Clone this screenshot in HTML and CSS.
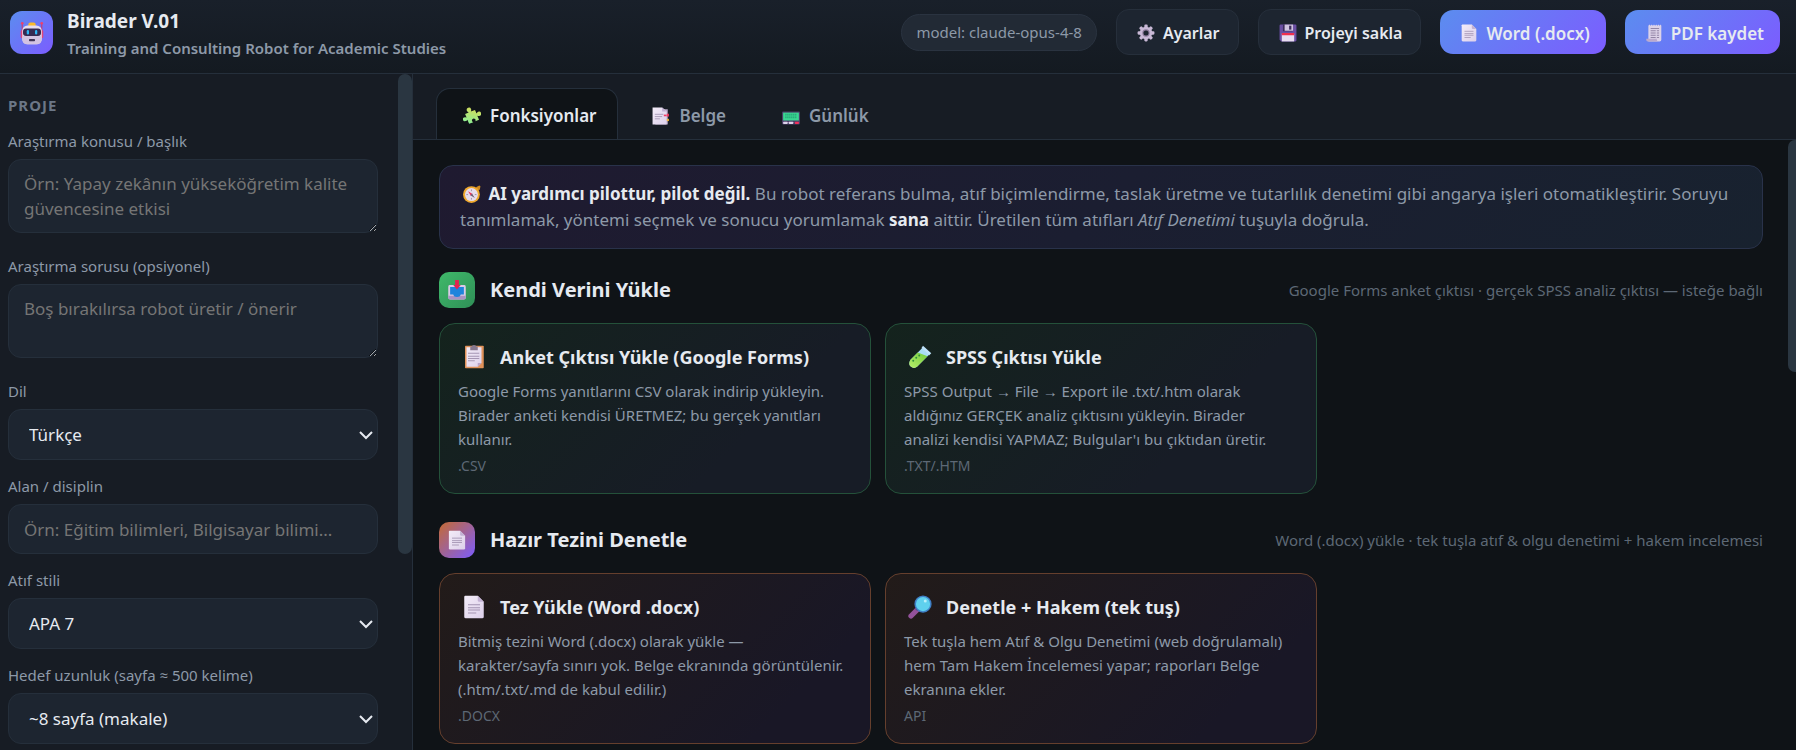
FILE: index.html
```
<!DOCTYPE html>
<html lang="tr">
<head>
    <meta charset="UTF-8">
    <meta name="viewport" content="width=device-width, initial-scale=1.0">
    <title>Birader V.01</title>
    <link rel="stylesheet" href="styles.css">
</head>
<body>

    <!-- Icon set -->
    <svg class="sprite" aria-hidden="true">
        <defs>
            <linearGradient id="g-puzzle" x1="1" y1="0" x2="0" y2="1">
                <stop offset="0" stop-color="#e8d84a"/>
                <stop offset="1" stop-color="#7ff2a0"/>
            </linearGradient>
            <linearGradient id="g-page" x1="0" y1="0" x2="1" y2="1">
                <stop offset="0" stop-color="#f3ecf8"/>
                <stop offset="1" stop-color="#ddd0ea"/>
            </linearGradient>
            <linearGradient id="g-tube" x1="1" y1="0" x2="0" y2="1">
                <stop offset="0" stop-color="#6fc93c"/>
                <stop offset="1" stop-color="#b8f06a"/>
            </linearGradient>
        </defs>
        <symbol id="i-robot" viewBox="0 0 32 32">
            <path d="M3 4v10M29 4v10" stroke="#c0407a" stroke-width="1.6"/>
            <circle cx="3" cy="3" r="1.8" fill="#f0406c"/>
            <circle cx="29" cy="3" r="1.8" fill="#f0406c"/>
            <rect x="1" y="12" width="5" height="11" rx="2" fill="#e0457b"/>
            <rect x="26" y="12" width="5" height="11" rx="2" fill="#e0457b"/>
            <path d="M11 5q0-3 3-3h4q3 0 3 3v3H11z" fill="#f9b92b"/>
            <rect x="3" y="6" width="26" height="25" rx="7" fill="#e6dcf0"/>
            <path d="M3 20h26v4q0 7-7 7H10q-7 0-7-7z" fill="#d3c3e2"/>
            <rect x="4" y="10" width="24" height="10" rx="4" fill="#352a52"/>
            <rect x="9" y="12" width="3" height="6" rx="1.5" fill="#2db6f5"/>
            <rect x="20" y="12" width="3" height="6" rx="1.5" fill="#2db6f5"/>
            <rect x="12" y="24" width="8" height="3" rx="1" fill="#3f3458"/>
        </symbol>
        <symbol id="i-gear" viewBox="0 0 32 32">
            <g fill="#c9b9d6">
                <rect x="13" y="1" width="6" height="30" rx="2"/>
                <rect x="13" y="1" width="6" height="30" rx="2" transform="rotate(45 16 16)"/>
                <rect x="13" y="1" width="6" height="30" rx="2" transform="rotate(90 16 16)"/>
                <rect x="13" y="1" width="6" height="30" rx="2" transform="rotate(135 16 16)"/>
                <circle cx="16" cy="16" r="11"/>
            </g>
            <circle cx="16" cy="16" r="6.5" fill="#8d7b9c"/>
            <circle cx="16" cy="16" r="4.5" fill="#1d2530"/>
        </symbol>
        <symbol id="i-floppy" viewBox="0 0 32 32">
            <path d="M3 1h26q2 0 2 2v26q0 2-2 2H4l-3-3V3q0-2 2-2z" fill="#6a4fa3"/>
            <rect x="7" y="1" width="17" height="12" fill="#3c2d5c"/>
            <rect x="10" y="1" width="15" height="11" fill="#cfc3e0"/>
            <rect x="18" y="3" width="4" height="7" fill="#3c2d5c"/>
            <rect x="5" y="17" width="22" height="14" fill="#e9def2"/>
            <rect x="5" y="16" width="22" height="4" fill="#f0304f"/>
        </symbol>
        <symbol id="i-doc" viewBox="0 0 32 32">
            <path d="M4 1h17l8 8v20q0 2-2 2H5q-2 0-2-2V2z" fill="url(#g-page)"/>
            <path d="M21 1l8 8h-6q-2 0-2-2z" fill="#c3b2d4"/>
            <path d="M8 13h16M8 17h16M8 20h16M8 24h11" stroke="#a394b2" stroke-width="1.4"/>
        </symbol>
        <symbol id="i-receipt" viewBox="0 0 32 32">
            <path d="M6 3l2-2 2 2 2-2 2 2 2-2 2 2 2-2 2 2 2-2 2 2 2-2 1 2v25q0 3-3 3H6z" fill="#ddd2e8"/>
            <path d="M2 26h19v2q0 3 3 3H5q-3 0-3-5z" fill="#bba9cc"/>
            <path d="M10 8h15M10 12h9M21 12h4M10 16h9M21 16h4M10 20h9M21 20h4M10 24h9M21 24h4" stroke="#8a7c9e" stroke-width="1.6"/>
        </symbol>
        <symbol id="i-puzzle" viewBox="0 0 32 32">
            <g transform="rotate(-22 16 16)" fill="url(#g-puzzle)">
                <path d="M6 8h7q-2-2-2-4a4 4 0 0 1 8 0q0 2-2 4h8v7q2-2 4-2a4 4 0 0 1 0 8q-2 0-4-2v8h-7q2-2 1-4a3.500 3.500 0 0 0-6 0q-1 2 1 4H6v-8q-2 2-4 1a3.500 3.500 0 0 1 0-7q2 0 4 2z"/>
            </g>
        </symbol>
        <symbol id="i-tabs" viewBox="0 0 32 32">
            <path d="M6 4h22v27H6z" fill="#bcaacb"/>
            <rect x="26" y="12" width="4" height="5" fill="#ef3e66"/>
            <rect x="26" y="21" width="4" height="4" fill="#f5b73a"/>
            <path d="M1 1h17l8 7v23H1z" fill="url(#g-page)"/>
            <path d="M18 1l8 7h-8z" fill="#c3b2d4"/>
            <path d="M5 13h15M5 17h13M5 21h9" stroke="#a394b2" stroke-width="1.5"/>
            <path d="M21 15h5" stroke="#ef3e66" stroke-width="3"/>
        </symbol>
        <symbol id="i-pager" viewBox="0 0 32 32">
            <rect x="0" y="8" width="32" height="23" rx="2" fill="#4c3e69"/>
            <rect x="2" y="10" width="28" height="14" fill="#3bd692"/>
            <path d="M6 13h20M6 16h20M6 19h20" stroke="#188a68" stroke-width="1.5" stroke-dasharray="2 1.5"/>
            <rect x="2" y="26" width="8" height="4" rx="1" fill="#ddd2ea"/>
            <rect x="12" y="26" width="8" height="4" rx="1" fill="#ddd2ea"/>
            <rect x="23" y="26" width="7" height="4" rx="1" fill="#f0305c"/>
        </symbol>
        <symbol id="i-compass" viewBox="0 0 32 32">
            <path d="M23 4l6-3 2 1-1 6-4 2z" fill="#d18b1f"/>
            <circle cx="15" cy="17" r="15" fill="#f0a92e"/>
            <circle cx="15" cy="17" r="11.5" fill="#e6dcec"/>
            <path d="M15 8v3M15 23v3M6 17h3M21 17h3" stroke="#8f819c" stroke-width="1.4"/>
            <path d="M9 11l8 5-3 3z" fill="#ee3159"/>
            <path d="M21 23l-8-5 3-3z" fill="#6c6076"/>
        </symbol>
        <symbol id="i-inbox" viewBox="0 0 32 32">
            <path d="M4 8h24q2 0 2 3v17q0 3-3 3H5q-3 0-3-3V11q0-3 2-3z" fill="#d9cbe8"/>
            <path d="M2 25h28v3q0 3-3 3H5q-3 0-3-3z" fill="#a994c4"/>
            <path d="M5 11h22v12h-5q-1 4-6 4t-6-4H5z" fill="#1f84dc"/>
            <path d="M13 0h6v8h3l-6 7-6-7h3z" fill="#e22450"/>
        </symbol>
        <symbol id="i-clipboard" viewBox="0 0 32 32">
            <rect x="4" y="1" width="25" height="30" rx="1" fill="#e0925a"/>
            <path d="M6 3h20v21l-5 5H6z" fill="url(#g-page)"/>
            <path d="M26 24l-5 5v-5z" fill="#b9a3c8"/>
            <path d="M11 2h2q0-2 3-2t3 2h2v5H11z" fill="#86788f"/>
            <path d="M8 11h15M8 15h15M8 18h15M8 21h9" stroke="#a394b2" stroke-width="1.3"/>
        </symbol>
        <symbol id="i-tube" viewBox="0 0 32 32">
            <path d="M19 4l9 9L12 29q-4 3-8 0t-1-9z" fill="#a9dcf4"/>
            <path d="M13 10l13 5-14 14q-4 3-8 0t-1-9z" fill="url(#g-tube)"/>
            <path d="M20 1l11 10-3 3L18 4z" fill="#bfe3fb"/>
            <circle cx="11" cy="17" r="1.3" fill="#2f8f3a"/>
            <circle cx="15" cy="14" r="1.3" fill="#2f8f3a"/>
            <circle cx="7" cy="21" r="1.3" fill="#2f8f3a"/>
        </symbol>
        <symbol id="i-search" viewBox="0 0 32 32">
            <path d="M12 20l-8 8" stroke="#93529b" stroke-width="7" stroke-linecap="round"/>
            <path d="M13 18l-2 2" stroke="#5a3d72" stroke-width="4"/>
            <circle cx="20" cy="12" r="11.5" fill="#3f7fc6"/>
            <circle cx="20" cy="12" r="9.5" fill="#5fd0ee"/>
            <circle cx="23" cy="8" r="2" fill="#b9f0fb"/>
        </symbol>
    </svg>

    <header class="topbar">
        <div class="brand">
            <div class="logo"><svg class="icon"><use href="#i-robot"/></svg></div>
            <div>
                <h1>Birader V.01</h1>
                <p>Training and Consulting Robot for Academic Studies</p>
            </div>
        </div>
        <div class="actions">
            <span class="pill">model: claude-opus-4-8</span>
            <button class="btn"><svg class="icon"><use href="#i-gear"/></svg>Ayarlar</button>
            <button class="btn"><svg class="icon"><use href="#i-floppy"/></svg>Projeyi sakla</button>
            <button class="btn primary"><svg class="icon"><use href="#i-doc"/></svg>Word (.docx)</button>
            <button class="btn primary"><svg class="icon"><use href="#i-receipt"/></svg>PDF kaydet</button>
        </div>
    </header>

    <div class="layout">
        <aside class="sidebar">
            <form class="project">
                <h2>Proje</h2>
                <div class="field tall">
                    <label for="topic">Araştırma konusu / başlık</label>
                    <textarea id="topic" placeholder="Örn: Yapay zekânın yükseköğretim kalite güvencesine etkisi"></textarea>
                </div>
                <div class="field tall">
                    <label for="question">Araştırma sorusu (opsiyonel)</label>
                    <textarea id="question" placeholder="Boş bırakılırsa robot üretir / önerir"></textarea>
                </div>
                <div class="field">
                    <label for="lang">Dil</label>
                    <select id="lang"><option>Türkçe</option></select>
                </div>
                <div class="field">
                    <label for="area">Alan / disiplin</label>
                    <input type="text" id="area" placeholder="Örn: Eğitim bilimleri, Bilgisayar bilimi...">
                </div>
                <div class="field">
                    <label for="style">Atıf stili</label>
                    <select id="style"><option>APA 7</option></select>
                </div>
                <div class="field">
                    <label for="length">Hedef uzunluk (sayfa ≈ 500 kelime)</label>
                    <select id="length"><option>~8 sayfa (makale)</option></select>
                </div>
            </form>
            <div class="rail"><div class="thumb"></div></div>
        </aside>

        <main class="main">
            <nav class="tabs">
                <button class="tab active"><svg class="icon"><use href="#i-puzzle"/></svg>Fonksiyonlar</button>
                <button class="tab"><svg class="icon"><use href="#i-tabs"/></svg>Belge</button>
                <button class="tab"><svg class="icon"><use href="#i-pager"/></svg>Günlük</button>
            </nav>
            <div class="view">
                <div class="content">
                    <div class="notice">
                        <svg class="icon"><use href="#i-compass"/></svg>
                        <b>AI yardımcı pilottur, pilot değil.</b> Bu robot referans bulma, atıf biçimlendirme, taslak üretme ve tutarlılık denetimi gibi angarya işleri otomatikleştirir. Soruyu tanımlamak, yöntemi seçmek ve sonucu yorumlamak <b>sana</b> aittir. Üretilen tüm atıfları <i>Atıf Denetimi</i> tuşuyla doğrula.
                    </div>

                    <section class="group green">
                        <div class="group-head">
                            <span class="badge"><svg class="icon"><use href="#i-inbox"/></svg></span>
                            <h2>Kendi Verini Yükle</h2>
                            <span class="hint">Google Forms anket çıktısı · gerçek SPSS analiz çıktısı — isteğe bağlı</span>
                        </div>
                        <div class="cards">
                            <button class="card">
                                <span class="card-title"><svg class="icon"><use href="#i-clipboard"/></svg>Anket Çıktısı Yükle (Google Forms)</span>
                                <span class="card-text">Google Forms yanıtlarını CSV olarak indirip yükleyin. Birader anketi kendisi ÜRETMEZ; bu gerçek yanıtları kullanır.</span>
                                <span class="card-tag">.CSV</span>
                            </button>
                            <button class="card">
                                <span class="card-title"><svg class="icon"><use href="#i-tube"/></svg>SPSS Çıktısı Yükle</span>
                                <span class="card-text">SPSS Output → File → Export ile .txt/.htm olarak aldığınız GERÇEK analiz çıktısını yükleyin. Birader analizi kendisi YAPMAZ; Bulgular'ı bu çıktıdan üretir.</span>
                                <span class="card-tag">.TXT/.HTM</span>
                            </button>
                        </div>
                    </section>

                    <section class="group orange">
                        <div class="group-head">
                            <span class="badge"><svg class="icon"><use href="#i-doc"/></svg></span>
                            <h2>Hazır Tezini Denetle</h2>
                            <span class="hint">Word (.docx) yükle · tek tuşla atıf &amp; olgu denetimi + hakem incelemesi</span>
                        </div>
                        <div class="cards">
                            <button class="card">
                                <span class="card-title"><svg class="icon"><use href="#i-doc"/></svg>Tez Yükle (Word .docx)</span>
                                <span class="card-text">Bitmiş tezini Word (.docx) olarak yükle — karakter/sayfa sınırı yok. Belge ekranında görüntülenir. (.htm/.txt/.md de kabul edilir.)</span>
                                <span class="card-tag">.DOCX</span>
                            </button>
                            <button class="card">
                                <span class="card-title"><svg class="icon"><use href="#i-search"/></svg>Denetle + Hakem (tek tuş)</span>
                                <span class="card-text">Tek tuşla hem Atıf &amp; Olgu Denetimi (web doğrulamalı) hem Tam Hakem İncelemesi yapar; raporları Belge ekranına ekler.</span>
                                <span class="card-tag">API</span>
                            </button>
                        </div>
                    </section>
                </div>
                <div class="rail"><div class="thumb"></div></div>
            </div>
        </main>
    </div>

</body>
</html>
```
FILE: styles.css
```
:root {
    --bg: #0f1317;
    --panel: #171c24;
    --field: #1d2530;
    --line: #252f3b;
    --thumb: #2a3641;
    --text: #e6eaf0;
    --muted: #8d99a8;
    --dim: #5d6875;
}
* {
    box-sizing: border-box;
}
body {
    margin: 0;
    height: 100vh;
    display: flex;
    flex-direction: column;
    overflow: hidden;
    background: var(--bg);
    color: var(--text);
    font-family: "Noto Sans", "Open Sans", sans-serif;
    font-size: 16px;
}
h1, h2, p {
    margin: 0;
}
button, input, select, textarea {
    font-family: inherit;
    color: var(--text);
}
button {
    cursor: pointer;
}
.sprite {
    position: absolute;
    width: 0;
    height: 0;
}
.icon {
    width: 18px;
    height: 18px;
    flex-shrink: 0;
}

/* Header */
.topbar {
    display: flex;
    justify-content: space-between;
    align-items: flex-start;
    height: 74px;
    padding: 9px 16px 0 10px;
    background: linear-gradient(180deg, #19202a, #141a21);
    border-bottom: 1px solid var(--line);
}
.brand {
    display: flex;
    gap: 14px;
}
.logo {
    display: flex;
    align-items: center;
    justify-content: center;
    width: 43px;
    height: 43px;
    margin-top: 2px;
    border-radius: 12px;
    background: linear-gradient(135deg, #5b8def, #7c5cff);
}
.logo .icon {
    width: 24px;
    height: 24px;
}
.brand h1 {
    font-size: 19px;
    line-height: 24px;
}
.brand p {
    font-size: 15px;
    line-height: 30px;
    font-weight: 600;
    color: var(--muted);
}
.actions {
    display: flex;
    align-items: center;
    gap: 19px;
}
.pill {
    padding: 0 14px;
    line-height: 35px;
    font-size: 15px;
    color: var(--muted);
    background: #222a35;
    border: 1px solid #2a3340;
    border-radius: 20px;
}
.btn {
    display: flex;
    align-items: center;
    gap: 8px;
    height: 46px;
    padding: 2px 18px 0 20px;
    font-size: 16px;
    font-weight: 600;
    background: var(--field);
    border: 1px solid #262f3b;
    border-radius: 13px;
}
.btn.primary {
    height: 44px;
    padding: 2px 16px 0 20px;
    font-size: 17px;
    border: none;
    background: linear-gradient(135deg, #5b8def, #7c5cff);
}

/* Sidebar */
.layout {
    display: flex;
    flex: 1;
    min-height: 0;
}
.sidebar {
    display: flex;
    width: 413px;
    flex-shrink: 0;
    background: var(--panel);
    border-right: 1px solid var(--line);
}
.project {
    flex: 1;
    padding: 19px 20px 0 8px;
    overflow: hidden;
}
.project h2 {
    font-size: 15px;
    line-height: 24px;
    letter-spacing: 1px;
    text-transform: uppercase;
    color: #6c7787;
    margin-bottom: 14px;
}
.field {
    margin-bottom: 16px;
}
.field.tall {
    margin-bottom: 23px;
}
.field label {
    display: block;
    font-size: 15px;
    line-height: 20px;
    margin-bottom: 8px;
    color: var(--muted);
}
.field input, .field select, .field textarea {
    display: block;
    width: 100%;
    font-size: 17px;
    background: var(--field);
    border: 1px solid var(--line);
    border-radius: 13px;
}
.field input {
    height: 50px;
    padding: 0 15px;
}
.field select {
    height: 51px;
    padding: 0 20px;
    appearance: none;
    background: var(--field) url("data:image/svg+xml,%3Csvg xmlns='http://www.w3.org/2000/svg' width='14' height='10' fill='none' stroke='%23e6eaf0' stroke-width='2'%3E%3Cpath d='M1 2l6 6 6-6'/%3E%3C/svg%3E") no-repeat right 4px center;
}
.field textarea {
    height: 74px;
    padding: 11px 15px;
    line-height: 25px;
    resize: vertical;
    overflow: hidden;
}
.field ::placeholder {
    color: #757575;
}

/* Scroll rails */
.rail {
    flex-shrink: 0;
    overflow: hidden;
}
.sidebar .rail {
    width: 14px;
}
.main .rail {
    width: 8px;
}
.thumb {
    width: 14px;
    border-radius: 7px;
    background: var(--thumb);
}
.sidebar .thumb {
    height: 71%;
}
.main .thumb {
    height: 38%;
}

/* Tabs */
.main {
    display: flex;
    flex: 1;
    flex-direction: column;
    min-width: 0;
}
.tabs {
    display: flex;
    gap: 7px;
    padding: 14px 23px 0;
    background: var(--panel);
    border-bottom: 1px solid var(--line);
}
.tab {
    display: flex;
    align-items: center;
    gap: 9px;
    height: 51px;
    padding: 3px 21px 0 26px;
    font-size: 17px;
    font-weight: 600;
    color: var(--muted);
    background: none;
    border: 1px solid transparent;
    border-bottom: none;
    border-radius: 14px 14px 0 0;
}
.tab.active {
    color: var(--text);
    background: var(--bg);
    border-color: var(--line);
}
.view {
    display: flex;
    flex: 1;
    min-height: 0;
}
.content {
    flex: 1;
    min-width: 0;
    padding: 25px 25px 0 26px;
    overflow: hidden;
}

/* Notice */
.notice {
    padding: 15px 20px;
    margin-bottom: 23px;
    font-size: 17px;
    line-height: 26px;
    color: var(--muted);
    background: linear-gradient(135deg, #1f1a30, #1b1e31 50%, #18222f);
    border: 1px solid #29324a;
    border-radius: 14px;
}
.notice .icon {
    margin: 0 3px;
    vertical-align: -3px;
}
.notice b {
    color: var(--text);
}

/* Function groups */
.group {
    margin-bottom: 28px;
}
.group-head {
    display: flex;
    align-items: center;
    gap: 15px;
    margin-bottom: 15px;
}
.group-head h2 {
    font-size: 20px;
    line-height: 28px;
}
.badge {
    display: flex;
    align-items: center;
    justify-content: center;
    width: 36px;
    height: 36px;
    border-radius: 10px;
}
.badge .icon {
    width: 20px;
    height: 20px;
}
.green .badge {
    background: linear-gradient(135deg, #3fb96a, #2f8f57);
}
.orange .badge {
    background: linear-gradient(135deg, #c46a32, #7c5cff);
}
.hint {
    margin-left: auto;
    font-size: 15px;
    color: var(--dim);
}
.cards {
    display: grid;
    grid-template-columns: repeat(3, 1fr);
    gap: 14px;
}
.card {
    display: flex;
    flex-direction: column;
    padding: 15px 26px 17px 18px;
    text-align: left;
    border: 1px solid;
    border-radius: 16px;
}
.green .card {
    background: linear-gradient(135deg, #14231d, #171c26 70%);
    border-color: #24513a;
}
.orange .card {
    background: linear-gradient(135deg, #221b19, #191726 80%);
    border-color: #653f2d;
}
.card-title {
    display: flex;
    align-items: center;
    gap: 14px;
    height: 36px;
    padding-left: 4px;
    margin-bottom: 4px;
    font-size: 18px;
    font-weight: 700;
}
.card-title .icon {
    width: 24px;
    height: 24px;
}
.card-text {
    font-size: 15px;
    line-height: 24px;
    color: var(--muted);
}
.card-tag {
    margin-top: 4px;
    font-size: 14px;
    line-height: 21px;
    color: var(--dim);
}
```
